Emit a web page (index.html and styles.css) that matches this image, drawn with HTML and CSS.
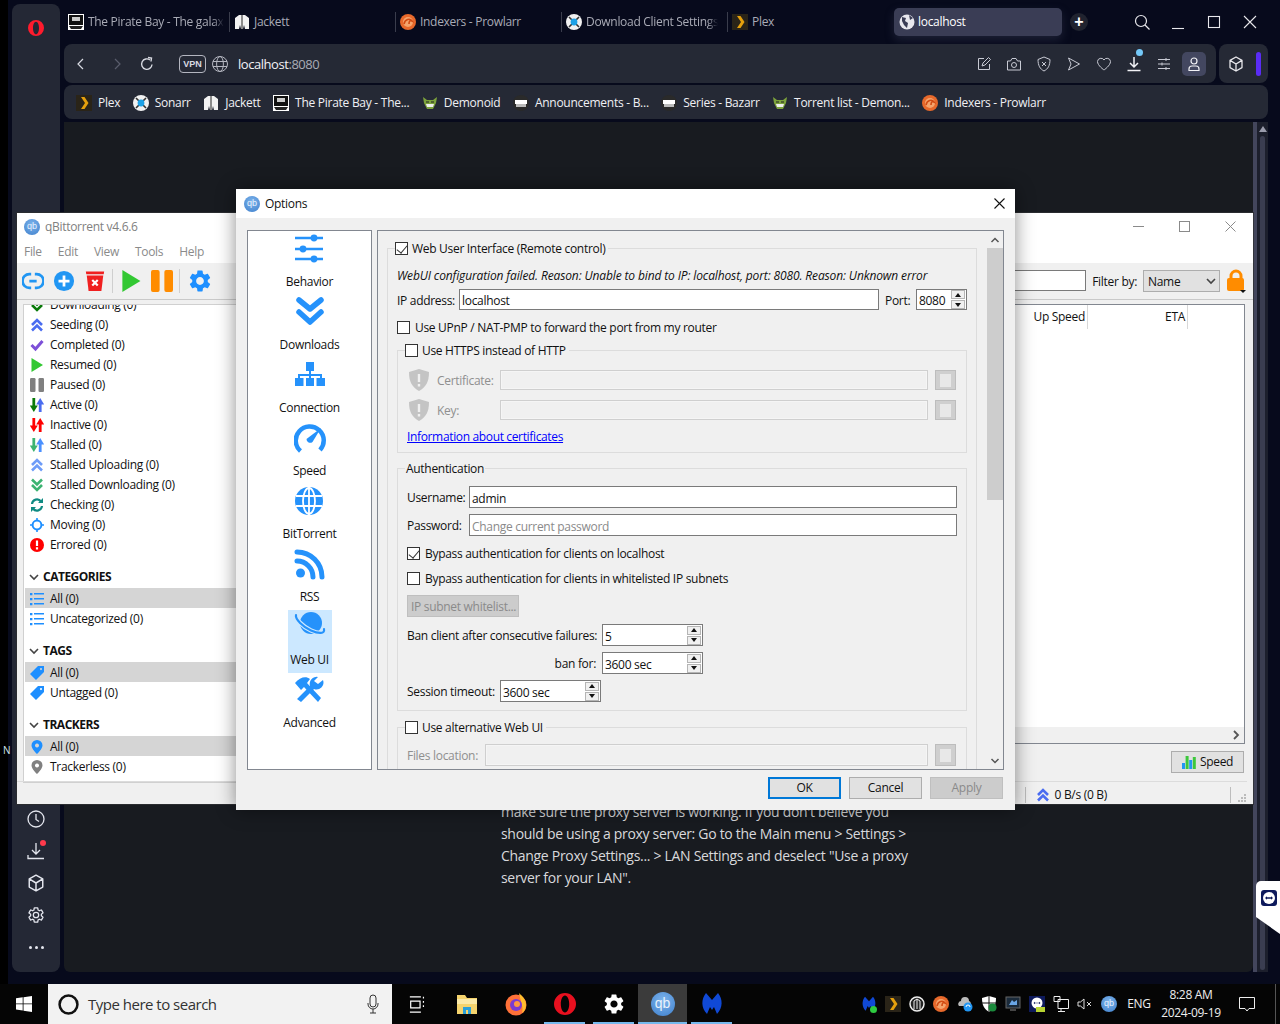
FILE: index.html
```html
<!DOCTYPE html>
<html lang="en">
<head>
<meta charset="utf-8">
<title>qBittorrent options over Opera</title>
<link rel="stylesheet" href="styles.css">
</head>
<body>
<svg class="sprite" xmlns="http://www.w3.org/2000/svg">
  <symbol id="pirate" viewBox="0 0 16 16"><rect width="16" height="16" fill="#fff"/><rect x="1" y="1" width="14" height="10" fill="#111"/><rect x="4" y="3" width="8" height="4" fill="#ccc"/><path d="M1 12h14l-2 3H3z" fill="#222"/></symbol>
  <symbol id="jackett" viewBox="0 0 16 16"><path d="M5 1h6l4 3v11h-4l-1-4-1 4H7l-1-4-1 4H1V4z" fill="#f2f2f2"/><path d="M8 1v14" stroke="#222"/></symbol>
  <symbol id="prowlarr" viewBox="0 0 16 16"><circle cx="8" cy="8" r="8" fill="#e8692b"/><circle cx="8" cy="8" r="5" fill="#f5a46c"/><path d="M4 10c1-5 6-6 8-3-2-1-3 0-3 3" fill="none" stroke="#d24a12" stroke-width="1.6"/></symbol>
  <symbol id="sonarr" viewBox="0 0 16 16"><circle cx="8" cy="8" r="8" fill="#f1f1f1"/><path d="M3 3l10 10M13 3L3 13" stroke="#333" stroke-width="1.6"/><circle cx="8" cy="8" r="3.4" fill="#1da1e6"/></symbol>
  <symbol id="plex" viewBox="0 0 16 16"><rect width="16" height="16" fill="#2a2418"/><path d="M5 2h3.5l4 6-4 6H5l4-6z" fill="#e5a00d"/></symbol>
  <symbol id="demon" viewBox="0 0 16 16"><path d="M1 2l4 3h6l4-3-1 6-3 6H5L2 8z" fill="#7da33c"/><path d="M4 9h8l-1 3H5z" fill="#eee"/><path d="M4 7h3M9 7h3" stroke="#222"/></symbol>
  <symbol id="bazarr" viewBox="0 0 16 16"><circle cx="8" cy="8" r="8" fill="#2a2a2a"/><path d="M2 5h12v4H2z" fill="#fff"/><path d="M3 9h10v3H3z" fill="#bbb"/></symbol>
  <symbol id="globe" viewBox="0 0 16 16"><circle cx="8" cy="8" r="7.5" fill="none" stroke="currentColor"/><ellipse cx="8" cy="8" rx="3.4" ry="7.5" fill="none" stroke="currentColor"/><path d="M1 5.5h14M1 10.5h14" stroke="currentColor"/></symbol>
  <symbol id="earth" viewBox="0 0 16 16"><circle cx="8" cy="8" r="7.5" fill="#e8e8ee"/><path d="M3 3l4 1-1 3 3 2-1 5-3-3-2-4zM10 1l4 3-3 2z" fill="#3a3d55"/></symbol>
  <symbol id="gear" viewBox="0 0 24 24"><path fill="currentColor" fill-rule="evenodd" d="M19.14 12.94c.04-.3.06-.61.06-.94 0-.32-.02-.64-.07-.94l2.03-1.58a.49.49 0 0 0 .12-.61l-1.92-3.32a.488.488 0 0 0-.59-.22l-2.39.96c-.5-.38-1.03-.7-1.62-.94l-.36-2.54a.484.484 0 0 0-.48-.41h-3.84c-.24 0-.43.17-.47.41l-.36 2.54c-.59.24-1.13.57-1.62.94l-2.39-.96c-.22-.08-.47 0-.59.22L2.74 8.87c-.12.21-.08.47.12.61l2.03 1.58c-.05.3-.09.63-.09.94s.02.64.07.94l-2.03 1.58a.49.49 0 0 0-.12.61l1.92 3.32c.12.22.37.29.59.22l2.39-.96c.5.38 1.03.7 1.62.94l.36 2.54c.05.24.24.41.48.41h3.84c.24 0 .44-.17.47-.41l.36-2.54c.59-.24 1.13-.56 1.62-.94l2.39.96c.22.08.47 0 .59-.22l1.92-3.32c.12-.22.07-.47-.12-.61l-2.01-1.58zM12 15.6c-1.98 0-3.6-1.62-3.6-3.6s1.62-3.6 3.6-3.6 3.6 1.62 3.6 3.6-1.62 3.6-3.6 3.6z"/></symbol>
  <symbol id="gear-o" viewBox="0 0 24 24"><path fill="none" stroke="currentColor" stroke-width="1.700" d="M19.14 12.94c.04-.3.06-.61.06-.94 0-.32-.02-.64-.07-.94l2.03-1.58a.49.49 0 0 0 .12-.61l-1.92-3.32a.488.488 0 0 0-.59-.22l-2.39.96c-.5-.38-1.03-.7-1.62-.94l-.36-2.54a.484.484 0 0 0-.48-.41h-3.84c-.24 0-.43.17-.47.41l-.36 2.54c-.59.24-1.13.57-1.62.94l-2.39-.96c-.22-.08-.47 0-.59.22L2.74 8.87c-.12.21-.08.47.12.61l2.03 1.58c-.05.3-.09.63-.09.94s.02.64.07.94l-2.03 1.58a.49.49 0 0 0-.12.61l1.92 3.32c.12.22.37.29.59.22l2.39-.96c.5.38 1.03.7 1.62.94l.36 2.54c.05.24.24.41.48.41h3.84c.24 0 .44-.17.47-.41l.36-2.54c.59-.24 1.13-.56 1.62-.94l2.39.96c.22.08.47 0 .59-.22l1.92-3.32c.12-.22.07-.47-.12-.61l-2.01-1.58zM12 15.6c-1.98 0-3.6-1.62-3.6-3.6s1.62-3.6 3.6-3.6 3.6 1.62 3.6 3.6-1.62 3.6-3.6 3.6z"/></symbol>
  <symbol id="cube" viewBox="0 0 16 16"><path d="M8 1l6 3.4v7.2L8 15l-6-3.4V4.4zM2 4.4L8 8l6-3.6M8 8v7" fill="none" stroke="currentColor" stroke-width="1.3" stroke-linejoin="round"/></symbol>
  <symbol id="dbl-up" viewBox="0 0 14 14"><path d="M2 7l5-5 5 5M2 12.5l5-5 5 5" fill="none" stroke="currentColor" stroke-width="2.6"/></symbol>
  <symbol id="dbl-down" viewBox="0 0 14 14"><path d="M2 1.5l5 5 5-5M2 7l5 5 5-5" fill="none" stroke="currentColor" stroke-width="2.6"/></symbol>
  <symbol id="check" viewBox="0 0 14 14"><path d="M1.5 7l4 4 7-8" fill="none" stroke="currentColor" stroke-width="3"/></symbol>
  <symbol id="tri" viewBox="0 0 14 14"><path d="M1.5 0L13 7 1.5 14z" fill="currentColor"/></symbol>
  <symbol id="bars" viewBox="0 0 14 14"><rect x="0" y="0" width="5.5" height="14" rx="1.2" fill="currentColor"/><rect x="8.5" y="0" width="5.5" height="14" rx="1.2" fill="currentColor"/></symbol>
  <symbol id="arrow-pair" viewBox="0 0 14 14"><path d="M3.800 0v9" fill="none" stroke="currentColor" stroke-width="2.800"/><path d="M-.2 7.500L3.800 14l4-6.500z" fill="currentColor"/><path d="M10.200 14V5" fill="none" stroke="var(--up,currentColor)" stroke-width="2.800"/><path d="M6.200 6.500L10.200 0l4 6.500z" fill="var(--up,currentColor)"/></symbol>
  <symbol id="sync" viewBox="0 0 14 14"><path d="M2 6a5 5 0 0 1 9-2.500M12 8a5 5 0 0 1-9 2.500" fill="none" stroke="currentColor" stroke-width="2.200"/><path d="M13 0v5H8zM1 14V9h5z" fill="currentColor"/></symbol>
  <symbol id="target" viewBox="0 0 14 14"><circle cx="7" cy="7" r="4.4" fill="none" stroke="currentColor" stroke-width="2"/><path d="M7 0v3M7 11v3M0 7h3M11 7h3" stroke="currentColor" stroke-width="1.6"/></symbol>
  <symbol id="err" viewBox="0 0 14 14"><circle cx="7" cy="7" r="7" fill="#f00"/><path d="M5.9 2.500h2.200v5.500H5.900zM5.900 9.300h2.200v2.200H5.900z" fill="#fff"/></symbol>
  <symbol id="list" viewBox="0 0 14 14"><path d="M0 1h2.400v2.200H0zM0 6h2.400v2.200H0zM0 11h2.400v2.200H0zM4 1h10v1.600H4zM4 6h10v1.600H4zM4 11h10v1.600H4z" fill="currentColor"/></symbol>
  <symbol id="tag" viewBox="0 0 14 14"><path d="M8 0h6v6l-8 8-6-6zM11 2a1 1 0 1 0 .01 0z" fill="currentColor" fill-rule="evenodd"/></symbol>
  <symbol id="pin" viewBox="0 0 14 14"><path d="M7 0a5.500 5.500 0 0 1 5.500 5.500C12.500 9 7 14 7 14S1.500 9 1.500 5.500A5.500 5.500 0 0 1 7 0zm0 3.500a2 2 0 1 0 .01 0z" fill="currentColor" fill-rule="evenodd"/></symbol>
  <symbol id="chev-down" viewBox="0 0 10 10"><path d="M1 3l4 4 4-4" fill="none" stroke="currentColor" stroke-width="1.600"/></symbol>
  <symbol id="shield" viewBox="0 0 22 22"><path d="M11 0l10 3c0 10-3 15-10 19C4 18 1 13 1 3z" fill="#c4c4c4"/><path d="M9.800 5h2.400v8H9.800zM9.800 15h2.400v2.400H9.800z" fill="#f0f0f0"/></symbol>
  <symbol id="behavior" viewBox="0 0 32 32"><path d="M2 5h28M2 16h28M2 26h28" stroke="currentColor" stroke-width="2.400"/><circle cx="21" cy="5" r="3.400" fill="currentColor"/><circle cx="10" cy="16" r="3.400" fill="currentColor"/><circle cx="21" cy="26" r="3.400" fill="currentColor"/></symbol>
  <symbol id="downloads" viewBox="0 0 32 32"><path d="M5 4l11 9 11-9M5 16l11 10 11-10" fill="none" stroke="currentColor" stroke-width="5.500" stroke-linecap="round" stroke-linejoin="round"/></symbol>
  <symbol id="connection" viewBox="0 0 32 32"><path d="M12 3h8v9h-8zM1 19h8.500v8H1zM12 19h8v8h-8zM22.500 19H31v8h-8.500z" fill="currentColor"/><path d="M16 12v8M5 20v-4h22v4" fill="none" stroke="currentColor" stroke-width="2"/></symbol>
  <symbol id="speed" viewBox="0 0 32 32"><path d="M6.500 29A14 14 0 1 1 26 28" fill="none" stroke="currentColor" stroke-width="4.500"/><path d="M27 6L18.500 20a3.700 3.700 0 0 1-6-3z" fill="currentColor"/></symbol>
  <symbol id="bt" viewBox="0 0 32 32"><circle cx="16" cy="16" r="14" fill="currentColor"/><g fill="none" stroke="#fff" stroke-width="1.800"><ellipse cx="16" cy="16" rx="6" ry="13"/><path d="M16 2v28M3 11h26M3 21h26"/></g></symbol>
  <symbol id="rss" viewBox="0 0 32 32"><circle cx="6.500" cy="25" r="4.500" fill="currentColor"/><path d="M3 13a16 16 0 0 1 16 16M3 4a25 25 0 0 1 25 25" fill="none" stroke="currentColor" stroke-width="5" stroke-linecap="round"/></symbol>
  <symbol id="webui" viewBox="0 0 32 32"><circle cx="17" cy="12" r="11" fill="currentColor"/><path d="M2 4C1 8 9 16 17 19.500S31 23 30 18" fill="none" stroke="#cce8ff" stroke-width="4.500"/><path d="M2 4C1 8 9 16 17 19.500S31 23 30 18" fill="none" stroke="currentColor" stroke-width="2.200" stroke-linecap="round"/></symbol>
  <symbol id="advanced" viewBox="0 0 32 32"><path d="M2 9c5-6 11-7 15-4l-3 4 14 15-3 4L11 13l-3 3-6-7z" fill="currentColor"/><path d="M30 6a7 7 0 0 1-9 9L8 28l-4-3 13-13a7 7 0 0 1 8-9l-4 4 4 3z" fill="currentColor"/></symbol>
  <symbol id="win" viewBox="0 0 16 16"><path d="M0 2.300l6.700-1v6.200H0zM7.500 1.200L16 0v7.500H7.500zM0 8.300h6.700v6.300l-6.700-1zM7.500 8.300H16V16l-8.500-1.200z" fill="currentColor"/></symbol>
  <symbol id="mb" viewBox="0 0 24 24"><path d="M6 1c-5 6-5 15 1 21l3-7 2 3 2-3 3 7c6-6 6-15 1-21l-6 7z" fill="#1049d6"/></symbol>
</svg>

<div class="desktop">
  <span class="stray">N</span>

  <div class="browser">
    <aside class="rail">
      <svg class="rail-logo" viewBox="0 0 16 16"><path fill="#ff1b2d" fill-rule="evenodd" d="M8 0a8 8 0 1 1 0 16A8 8 0 0 1 8 0zm0 1.700c-1.700 0-3 2.800-3 6.300s1.300 6.300 3 6.300 3-2.800 3-6.300-1.300-6.300-3-6.300z"/></svg>
      <div class="rail-tools">
        <svg class="rail-ico" viewBox="0 0 18 18"><circle cx="9" cy="9" r="8" fill="none" stroke="currentColor" stroke-width="1.300"/><path d="M9 4v5.500l3 2" fill="none" stroke="currentColor" stroke-width="1.300"/></svg>
        <span class="rail-dl">
          <svg class="rail-ico" viewBox="0 0 18 18"><path d="M9 1v11M5 8l4 4 4-4M1 13v3.500h16" fill="none" stroke="currentColor" stroke-width="1.300"/></svg>
          <i class="rail-dot"></i>
        </span>
        <svg class="rail-ico"><use href="#cube"/></svg>
        <svg class="rail-ico"><use href="#gear-o"/></svg>
        <span class="rail-more"><i></i><i></i><i></i></span>
      </div>
    </aside>

    <div class="chrome">
      <nav class="tabs">
        <div class="tab"><svg class="fav"><use href="#pirate"/></svg><span class="tab-fade">The Pirate Bay - The galax</span></div>
        <div class="tab"><svg class="fav"><use href="#jackett"/></svg><span>Jackett</span></div>
        <div class="tab"><svg class="fav"><use href="#prowlarr"/></svg><span>Indexers - Prowlarr</span></div>
        <div class="tab"><svg class="fav"><use href="#sonarr"/></svg><span class="tab-fade">Download Client Settings</span></div>
        <div class="tab tab-plain"><svg class="fav"><use href="#plex"/></svg><span>Plex</span></div>
        <div class="tab-active"><svg class="fav"><use href="#earth"/></svg><span>localhost</span></div>
        <span class="tab-add">+</span>
        <div class="win-ctl">
          <svg class="ctl" viewBox="0 0 16 16"><circle cx="7" cy="7" r="5.500" fill="none" stroke="currentColor" stroke-width="1.200"/><path d="M11 11l4.500 4.500" stroke="currentColor" stroke-width="1.200"/></svg>
          <svg class="ctl" viewBox="0 0 16 16"><path d="M2 14.500h12" stroke="currentColor" stroke-width="1.100"/></svg>
          <svg class="ctl" viewBox="0 0 16 16"><rect x="2.500" y="2.500" width="11" height="11" fill="none" stroke="currentColor" stroke-width="1.100"/></svg>
          <svg class="ctl" viewBox="0 0 16 16"><path d="M2 2l12 12M14 2L2 14" stroke="currentColor" stroke-width="1.100"/></svg>
        </div>
      </nav>

      <div class="addr-row">
        <div class="addr">
          <svg class="nav-ico nav-back" viewBox="0 0 16 16"><path d="M10 3L5 8l5 5" fill="none" stroke="currentColor" stroke-width="1.200"/></svg>
          <svg class="nav-ico nav-fwd" viewBox="0 0 16 16"><path d="M6 3l5 5-5 5" fill="none" stroke="currentColor" stroke-width="1.200"/></svg>
          <svg class="nav-ico nav-reload" viewBox="0 0 16 16"><path d="M13 8.500A5.200 5.200 0 1 1 11 4" fill="none" stroke="currentColor" stroke-width="1.400"/><path d="M9 1.500l3.500.5-.5 3.500" fill="none" stroke="currentColor" stroke-width="1.400"/></svg>
          <span class="vpn">VPN</span>
          <svg class="addr-globe"><use href="#globe"/></svg>
          <span class="url">localhost<span class="url-port">:8080</span></span>
          <div class="addr-tools">
            <svg class="tool" viewBox="0 0 16 16"><path d="M8 2.500H2.500v11h11V8M6 10l1-3 5.500-5.500 2 2L9 9z" fill="none" stroke="currentColor"/></svg>
            <svg class="tool" viewBox="0 0 16 16"><path d="M1.500 5h3l1.500-2.500h4L11.500 5h3v9h-13z" fill="none" stroke="currentColor"/><circle cx="8" cy="9" r="2.500" fill="none" stroke="currentColor"/></svg>
            <svg class="tool" viewBox="0 0 16 16"><path d="M8 1l6 2.500c0 6-2 9.500-6 11.500C4 13 2 9.500 2 3.500z" fill="none" stroke="currentColor"/><path d="M6 6l4 4M10 6l-4 4" stroke="currentColor"/></svg>
            <svg class="tool" viewBox="0 0 16 16"><path d="M2.500 2l11 6-11 6 2.500-6z" fill="none" stroke="currentColor"/></svg>
            <svg class="tool" viewBox="0 0 16 16"><path d="M8 14S1.500 9.500 1.500 5.500A3.500 3.500 0 0 1 8 4a3.500 3.500 0 0 1 6.500 1.500C14.500 9.500 8 14 8 14z" fill="none" stroke="currentColor"/></svg>
            <span class="tool-dl">
              <svg class="tool" viewBox="0 0 16 16"><path d="M8 1v10M4 7l4 4 4-4" fill="none" stroke="currentColor" stroke-width="1.500"/><path d="M1.500 14.500h13" stroke="currentColor" stroke-width="1.500"/></svg>
              <i class="tool-dot"></i>
            </span>
            <svg class="tool" viewBox="0 0 16 16"><path d="M2 3.500h12M2 8h12M2 12.500h12M10 2v3M6 6.500v3M10 11v3" stroke="currentColor"/></svg>
            <span class="profile"><svg class="tool" viewBox="0 0 16 16"><circle cx="8" cy="5" r="3" fill="none" stroke="currentColor" stroke-width="1.200"/><path d="M3 14.500v-1.500a3 3 0 0 1 3-3h4a3 3 0 0 1 3 3v1.500z" fill="none" stroke="currentColor" stroke-width="1.200"/></svg></span>
          </div>
        </div>
        <div class="ext">
          <svg class="tool"><use href="#cube"/></svg>
          <i class="ext-bar"></i>
        </div>
      </div>

      <div class="bookmarks">
        <span class="bm"><svg class="fav"><use href="#plex"/></svg>Plex</span>
        <span class="bm"><svg class="fav"><use href="#sonarr"/></svg>Sonarr</span>
        <span class="bm"><svg class="fav"><use href="#jackett"/></svg>Jackett</span>
        <span class="bm"><svg class="fav"><use href="#pirate"/></svg>The Pirate Bay - The...</span>
        <span class="bm"><svg class="fav"><use href="#demon"/></svg>Demonoid</span>
        <span class="bm"><svg class="fav"><use href="#bazarr"/></svg>Announcements - B...</span>
        <span class="bm"><svg class="fav"><use href="#bazarr"/></svg>Series - Bazarr</span>
        <span class="bm"><svg class="fav"><use href="#demon"/></svg>Torrent list - Demon...</span>
        <span class="bm"><svg class="fav"><use href="#prowlarr"/></svg>Indexers - Prowlarr</span>
      </div>

      <div class="page-row">
        <main class="page">
          <p class="page-text">make sure the proxy server is working. If you don't believe you should be using a proxy server: Go to the Main menu &gt; Settings &gt; Change Proxy Settings... &gt; LAN Settings and deselect "Use a proxy server for your LAN".</p>
        </main>
        <div class="page-scroll"><span class="page-up"></span><span class="page-thumb"></span></div>
      </div>
    </div>
  </div>

  <!-- qBittorrent main window -->
  <section class="window qbt">
    <header class="qbt-title">
      <span class="qb">qb</span>
      <span class="qbt-name">qBittorrent v4.6.6</span>
      <div class="qbt-ctl">
        <svg class="qbt-ctl-ico" viewBox="0 0 11 11"><path d="M0 5.500h11" stroke="currentColor"/></svg>
        <svg class="qbt-ctl-ico" viewBox="0 0 11 11"><rect x=".5" y=".5" width="10" height="10" fill="none" stroke="currentColor"/></svg>
        <svg class="qbt-ctl-ico" viewBox="0 0 11 11"><path d="M.5.500l10 10M10.500.500l-10 10" stroke="currentColor"/></svg>
      </div>
    </header>
    <div class="qbt-menu"><span>File</span><span>Edit</span><span>View</span><span>Tools</span><span>Help</span></div>
    <div class="qbt-tools">
      <span class="tb"><svg class="tb-ico" viewBox="0 0 24 24"><path d="M10 4.500H8a7.500 7.500 0 0 0 0 15h2M14 4.500h2a7.500 7.500 0 0 1 0 15h-2M8 12h8" fill="none" stroke="#2196f3" stroke-width="3"/></svg></span>
      <span class="tb"><svg class="tb-ico" viewBox="0 0 24 24"><circle cx="12" cy="12" r="11" fill="#2196f3"/><path d="M12 6v12M6 12h12" stroke="#fff" stroke-width="3"/></svg></span>
      <span class="tb"><svg class="tb-ico" viewBox="0 0 24 24"><path d="M2 1.500h20l-.5 3h-19z" fill="#f02020"/><path d="M3 6h18l-2 17H5z" fill="#f02020"/><path d="M9 11l6 6M15 11l-6 6" stroke="#fff" stroke-width="2.400"/></svg></span>
      <i class="tb-sep"></i>
      <span class="tb"><svg class="tb-ico c-play"><use href="#tri"/></svg></span>
      <span class="tb"><svg class="tb-ico c-pause"><use href="#bars"/></svg></span>
      <i class="tb-sep"></i>
      <span class="tb tb-gear"><svg class="tb-gear-ico c-blue"><use href="#gear"/></svg></span>
      <div class="qbt-filter">
        <input class="field filter-input" aria-label="Filter">
        <span class="filter-lb">Filter by:</span>
        <span class="combo">Name<svg class="combo-chev"><use href="#chev-down"/></svg></span>
        <span class="lock">
          <svg class="lock-ico" viewBox="0 0 20 24"><path d="M5 10V7a5 5 0 0 1 10 0v3" fill="none" stroke="#ff8c00" stroke-width="3"/><rect x="1" y="9" width="17" height="13" rx="2" fill="#ff8c00"/><path d="M14 21h6l-3 3z" fill="#111"/></svg>
        </span>
      </div>
    </div>
    <div class="qbt-body">
      <div class="side">
        <ul class="side-list side-status">
          <li><svg class="s-ico c-dl"><use href="#dbl-down"/></svg>Downloading (0)</li>
          <li><svg class="s-ico c-seed"><use href="#dbl-up"/></svg>Seeding (0)</li>
          <li><svg class="s-ico c-done"><use href="#check"/></svg>Completed (0)</li>
          <li><svg class="s-ico c-play"><use href="#tri"/></svg>Resumed (0)</li>
          <li><svg class="s-ico c-gray"><use href="#bars"/></svg>Paused (0)</li>
          <li><svg class="s-ico c-dl"><use href="#arrow-pair"/></svg>Active (0)</li>
          <li><svg class="s-ico c-red"><use href="#arrow-pair"/></svg>Inactive (0)</li>
          <li><svg class="s-ico c-sdl"><use href="#arrow-pair"/></svg>Stalled (0)</li>
          <li><svg class="s-ico c-sup"><use href="#dbl-up"/></svg>Stalled Uploading (0)</li>
          <li><svg class="s-ico c-sdl"><use href="#dbl-down"/></svg>Stalled Downloading (0)</li>
          <li><svg class="s-ico c-teal"><use href="#sync"/></svg>Checking (0)</li>
          <li><svg class="s-ico c-blue"><use href="#target"/></svg>Moving (0)</li>
          <li><svg class="s-ico"><use href="#err"/></svg>Errored (0)</li>
        </ul>
        <h3 class="side-head"><svg class="side-chev"><use href="#chev-down"/></svg>CATEGORIES</h3>
        <ul class="side-list">
          <li class="on"><svg class="s-ico c-blue"><use href="#list"/></svg>All (0)</li>
          <li><svg class="s-ico c-blue"><use href="#list"/></svg>Uncategorized (0)</li>
        </ul>
        <h3 class="side-head"><svg class="side-chev"><use href="#chev-down"/></svg>TAGS</h3>
        <ul class="side-list">
          <li class="on"><svg class="s-ico c-blue"><use href="#tag"/></svg>All (0)</li>
          <li><svg class="s-ico c-blue"><use href="#tag"/></svg>Untagged (0)</li>
        </ul>
        <h3 class="side-head"><svg class="side-chev"><use href="#chev-down"/></svg>TRACKERS</h3>
        <ul class="side-list">
          <li class="on"><svg class="s-ico c-blue"><use href="#pin"/></svg>All (0)</li>
          <li><svg class="s-ico c-gray"><use href="#pin"/></svg>Trackerless (0)</li>
        </ul>
      </div>
      <div class="torrents">
        <div class="t-panel">
          <div class="t-head"><span class="t-col">Up Speed</span><span class="t-col">ETA</span></div>
          <div class="t-rows"></div>
          <div class="t-hscroll"><svg class="t-right" viewBox="0 0 8 10"><path d="M2 1l4 4-4 4" fill="none" stroke="#555" stroke-width="1.800"/></svg></div>
        </div>
        <div class="t-foot">
          <span class="speed-btn"><svg class="speed-ico" viewBox="0 0 14 14"><rect x="0" y="8" width="3" height="6" fill="#2196f3"/><rect x="3.600" y="1" width="3" height="13" fill="#3cc83c"/><rect x="7.200" y="5" width="3" height="9" fill="#2196f3"/><rect x="10.800" y="2" width="3" height="12" fill="#3cc83c"/></svg>Speed</span>
        </div>
      </div>
    </div>
    <footer class="qbt-status">
      <i class="st-sep"></i>
      <svg class="st-up c-seed"><use href="#dbl-up"/></svg>
      <span class="st-rate">0 B/s (0 B)</span>
      <i class="st-sep"></i>
      <svg class="st-grip" viewBox="0 0 9 9"><path d="M6 0h2v2H6zM3 3h2v2H3zM6 3h2v2H6zM0 6h2v2H0zM3 6h2v2H3zM6 6h2v2H6z" fill="#bbb"/></svg>
    </footer>
  </section>

  <!-- Options dialog -->
  <section class="window dialog">
    <header class="dlg-title">
      <span class="qb">qb</span>
      <span>Options</span>
      <svg class="dlg-close" viewBox="0 0 11 11"><path d="M.5.500l10 10M10.500.500l-10 10" stroke="#111" stroke-width="1.100"/></svg>
    </header>
    <div class="dlg-body">
      <ul class="opt-list">
        <li class="opt"><div class="opt-in"><svg class="opt-ico"><use href="#behavior"/></svg><span>Behavior</span></div></li>
        <li class="opt"><div class="opt-in"><svg class="opt-ico"><use href="#downloads"/></svg><span>Downloads</span></div></li>
        <li class="opt"><div class="opt-in"><svg class="opt-ico"><use href="#connection"/></svg><span>Connection</span></div></li>
        <li class="opt"><div class="opt-in"><svg class="opt-ico"><use href="#speed"/></svg><span>Speed</span></div></li>
        <li class="opt"><div class="opt-in"><svg class="opt-ico"><use href="#bt"/></svg><span>BitTorrent</span></div></li>
        <li class="opt"><div class="opt-in"><svg class="opt-ico"><use href="#rss"/></svg><span>RSS</span></div></li>
        <li class="opt"><div class="opt-in opt-sel"><svg class="opt-ico"><use href="#webui"/></svg><span>Web UI</span></div></li>
        <li class="opt"><div class="opt-in"><svg class="opt-ico"><use href="#advanced"/></svg><span>Advanced</span></div></li>
      </ul>
      <div class="opt-pane">
        <div class="opt-scroll">
          <fieldset class="grp grp-outer">
            <legend class="lg"><label class="check"><input type="checkbox" checked><span>Web User Interface (Remote control)</span></label></legend>
            <p class="err-msg">WebUI configuration failed. Reason: Unable to bind to IP: localhost, port: 8080. Reason: Unknown error</p>
            <div class="row row-ip">
              <span class="lb-ip">IP address:</span>
              <input class="field grow" value="localhost" aria-label="IP address">
              <span class="lb-port">Port:</span>
              <span class="spin spin-port"><input class="spin-in" value="8080" aria-label="Port"><span class="spin-btns"><b class="up"></b><b class="down"></b></span></span>
            </div>
            <label class="check row-upnp"><input type="checkbox"><span>Use UPnP / NAT-PMP to forward the port from my router</span></label>

            <fieldset class="grp grp-https">
              <legend class="lg"><label class="check"><input type="checkbox"><span>Use HTTPS instead of HTTP</span></label></legend>
              <div class="row row-cert">
                <svg class="shield"><use href="#shield"/></svg>
                <span class="lb-off lb-cert">Certificate:</span>
                <input class="field off grow" aria-label="Certificate" disabled>
                <span class="browse"><i></i></span>
              </div>
              <div class="row row-cert row-key">
                <svg class="shield"><use href="#shield"/></svg>
                <span class="lb-off lb-cert">Key:</span>
                <input class="field off grow" aria-label="Key" disabled>
                <span class="browse"><i></i></span>
              </div>
              <a class="link" href="#">Information about certificates</a>
            </fieldset>

            <fieldset class="grp grp-auth">
              <legend class="lg lg-auth">Authentication</legend>
              <div class="row row-user">
                <span class="lb-user">Username:</span>
                <input class="field tall grow" value="admin" aria-label="Username">
              </div>
              <div class="row row-pass">
                <span class="lb-user">Password:</span>
                <input class="field tall grow" placeholder="Change current password" aria-label="Password">
              </div>
              <label class="check row-by1"><input type="checkbox" checked><span>Bypass authentication for clients on localhost</span></label>
              <label class="check row-by2"><input type="checkbox"><span>Bypass authentication for clients in whitelisted IP subnets</span></label>
              <span class="subnet">IP subnet whitelist...</span>
              <div class="row row-ban">
                <span class="lb-ban">Ban client after consecutive failures:</span>
                <span class="spin spin-wide"><input class="spin-in" value="5" aria-label="Ban after"><span class="spin-btns"><b class="up"></b><b class="down"></b></span></span>
              </div>
              <div class="row row-ban row-next">
                <span class="lb-ban lb-right">ban for:</span>
                <span class="spin spin-wide"><input class="spin-in" value="3600 sec" aria-label="Ban for"><span class="spin-btns"><b class="up"></b><b class="down"></b></span></span>
              </div>
              <div class="row row-ban row-next">
                <span class="lb-sess">Session timeout:</span>
                <span class="spin spin-wide"><input class="spin-in" value="3600 sec" aria-label="Session timeout"><span class="spin-btns"><b class="up"></b><b class="down"></b></span></span>
              </div>
            </fieldset>

            <fieldset class="grp grp-alt">
              <legend class="lg"><label class="check"><input type="checkbox"><span>Use alternative Web UI</span></label></legend>
              <div class="row row-files">
                <span class="lb-off lb-files">Files location:</span>
                <input class="field off tall grow" aria-label="Files location" disabled>
                <span class="browse"><i></i></span>
              </div>
            </fieldset>
          </fieldset>
        </div>
        <div class="opt-vbar">
          <svg class="vbar-arrow" viewBox="0 0 10 8"><path d="M1.500 6L5 2.500 8.500 6" fill="none" stroke="#555" stroke-width="1.500"/></svg>
          <div class="vbar-track"><div class="vbar-thumb"></div></div>
          <svg class="vbar-arrow" viewBox="0 0 10 8"><path d="M1.500 2L5 5.500 8.500 2" fill="none" stroke="#555" stroke-width="1.500"/></svg>
        </div>
      </div>
    </div>
    <footer class="dlg-foot">
      <span class="btn btn-ok">OK</span>
      <span class="btn">Cancel</span>
      <span class="btn btn-off">Apply</span>
    </footer>
  </section>

  <!-- TeamViewer edge tab -->
  <div class="tv">
    <svg class="tv-ico" viewBox="0 0 16 16"><rect width="16" height="16" rx="3" fill="#0e1a5c"/><circle cx="8" cy="8" r="6" fill="#fff"/><path d="M4 8l2-1.800v1h4v-1L12 8l-2 1.800v-1H6v1z" fill="#0e1a5c"/></svg>
  </div>

  <!-- Windows taskbar -->
  <footer class="taskbar">
    <span class="tk-start"><svg class="tk-win"><use href="#win"/></svg></span>
    <div class="tk-search">
      <svg class="tk-circle" viewBox="0 0 20 20"><circle cx="10" cy="10" r="8.500" fill="none" stroke="#111" stroke-width="2.400"/></svg>
      <span class="tk-ph">Type here to search</span>
      <svg class="tk-mic" viewBox="0 0 14 20"><rect x="4" y="1" width="6" height="12" rx="3" fill="none" stroke="#333"/><path d="M2 9v1a5 5 0 0 0 10 0V9M7 15v4M4 19h6" fill="none" stroke="#333"/></svg>
    </div>
    <div class="tk-apps">
      <span class="tk-app"><svg class="tk-ico-sm" viewBox="0 0 20 20"><path d="M1 1h13M1 19h13M2 6h11v8H2zM17 1v2M17 6v2M17 11v2" fill="none" stroke="#fff" stroke-width="1.400"/></svg></span>
      <span class="tk-app"><svg class="tk-ico" viewBox="0 0 24 24"><path d="M2 3h8l2 3h10v16H2z" fill="#f5d36d"/><path d="M2 7h20v5H2z" fill="#fbe9a8"/><path d="M8 22v-7h8v7h-3v-4h-2v4z" fill="#2aa0da"/></svg></span>
      <span class="tk-app"><svg class="tk-ico" viewBox="0 0 24 24"><circle cx="12" cy="13" r="10.500" fill="#ff7139"/><path d="M15 1c3 3 7 6 7 12a10 10 0 0 1-4 8c2-6-2-13-3-20z" fill="#ffbd2e"/><circle cx="12" cy="13" r="6" fill="#7a3bd1"/><circle cx="13" cy="12" r="3" fill="#ff9640"/></svg></span>
      <span class="tk-app tk-run"><svg class="tk-ico" viewBox="0 0 24 24"><path fill="#e8101f" fill-rule="evenodd" d="M12 1a11 11 0 1 1 0 22 11 11 0 0 1 0-22zm0 2.500c-2.400 0-4.200 3.800-4.200 8.500s1.800 8.500 4.200 8.500 4.200-3.800 4.200-8.500-1.800-8.500-4.200-8.500z"/></svg></span>
      <span class="tk-app tk-run"><svg class="tk-ico tk-gear"><use href="#gear"/></svg></span>
      <span class="tk-app tk-run tk-on"><span class="qb qb-lg">qb</span></span>
      <span class="tk-app tk-run"><svg class="tk-ico"><use href="#mb"/></svg></span>
    </div>
    <div class="tray">
      <span class="tr"><svg class="tr-ico"><use href="#mb"/></svg><i class="tr-green"></i></span>
      <span class="tr"><svg class="tr-ico"><use href="#plex"/></svg></span>
      <span class="tr"><svg class="tr-ico" viewBox="0 0 16 16"><circle cx="8" cy="8" r="7" fill="#222" stroke="#eee" stroke-width="1.500"/><path d="M5 13V5l3-2 3 2v8M8 3v10" fill="none" stroke="#eee"/></svg></span>
      <span class="tr"><svg class="tr-ico"><use href="#prowlarr"/></svg></span>
      <span class="tr"><svg class="tr-ico" viewBox="0 0 16 16"><path d="M2 10a3 3 0 0 1 2-5 4 4 0 0 1 8 0 3 3 0 0 1 1 5z" fill="#bbb"/><circle cx="11" cy="11" r="4.500" fill="#2196f3"/><path d="M9 11a2 2 0 0 1 4 0" stroke="#fff" fill="none"/></svg></span>
      <span class="tr"><svg class="tr-ico" viewBox="0 0 16 16"><path d="M8 0l7 2c0 7-2 11-7 14C3 13 1 9 1 2z" fill="#fff"/><path d="M8 0v16M1 7h14" stroke="#111"/><circle cx="11.500" cy="11.500" r="4" fill="#1a8a3c"/></svg></span>
      <span class="tr"><svg class="tr-ico" viewBox="0 0 16 16"><rect x="1" y="1" width="14" height="11" fill="#1a2a3a" stroke="#666"/><path d="M4 9l3-5 2 2 3-2v5z" fill="#6aa6e6"/><path d="M5 14h6" stroke="#888"/></svg></span>
      <span class="tr"><svg class="tr-ico" viewBox="0 0 16 16"><rect width="16" height="16" fill="#0e1a5c"/><circle cx="8" cy="7" r="5.500" fill="#fff"/><path d="M4.500 7l1.500-1.300v2.600zM11.500 7L10 5.700v2.600zM6 6.700h4v.6H6z" fill="#0e1a5c"/><rect x="7" y="11" width="9" height="5" fill="#b8d432"/></svg></span>
      <span class="tr"><svg class="tr-ico" viewBox="0 0 16 16"><path d="M5 3.500h10.500v9H5zM1 .500h6v5H1zM8 12.500v3M5 15.500h7" fill="#000" stroke="#eee"/></svg></span>
      <span class="tr"><svg class="tr-ico" viewBox="0 0 16 16"><path d="M1 6v4h2.500L7 13V3L3.500 6zM10 6l4 4M14 6l-4 4" fill="none" stroke="#ddd"/></svg></span>
      <span class="tr"><span class="qb">qb</span></span>
      <span class="tr-lang">ENG</span>
      <span class="tr-clock"><span>8:28 AM</span><span>2024-09-19</span></span>
      <span class="tr-note"><svg class="tr-note-ico" viewBox="0 0 16 16"><path d="M.5 1.500h15v11H10l-2 2.500-2-2.500H.5z" fill="none" stroke="#eee"/></svg></span>
      <i class="tr-desktop"></i>
    </div>
  </footer>
</div>
</body>
</html>
```
FILE: styles.css
```css
* { box-sizing: border-box; }
html, body { margin: 0; padding: 0; background: #000; }
body { font: 12px/16px "Open Sans", "Noto Sans", sans-serif; letter-spacing: -.3px; color: #111; }
ul { list-style: none; margin: 0; padding: 0; }
p { margin: 0; }
i { display: block; font-style: normal; }
.sprite { position: absolute; width: 0; height: 0; overflow: hidden; }

.desktop { position: relative; width: 1280px; height: 1024px; overflow: hidden; display: flex; flex-direction: column; background: #000; }
.stray { position: absolute; left: 3px; top: 744px; color: #cfe4ee; font-size: 10px; line-height: 12px; }

.qb { flex: none; display: block; width: 16px; height: 16px; border-radius: 50%; background: radial-gradient(circle at 50% 35%, #7db4ec, #3f80cc); color: #e8f2fc; font: 9px/15px "Liberation Sans", sans-serif; letter-spacing: 0; text-align: center; }
.qb-lg { width: 24px; height: 24px; font-size: 14px; line-height: 22px; }

/* browser */
.browser { flex: none; height: 984px; margin-left: 8px; background: #070a1c; display: flex; padding-left: 4px; color: #e8e8ec; }
.rail { flex: none; width: 48px; height: 968px; margin-top: 4px; background: #242835; border-radius: 8px; display: flex; flex-direction: column; align-items: center; color: #e4e6ee; }
.rail-logo { display: block; width: 16px; height: 16px; margin-top: 16px; }
.rail-tools { margin-top: auto; padding-bottom: 16px; display: flex; flex-direction: column; align-items: center; gap: 14px; }
.rail-ico { display: block; width: 18px; height: 18px; }
.rail-dl { position: relative; display: block; }
.rail-dot { position: absolute; left: 13px; top: -2px; width: 6px; height: 6px; border-radius: 50%; background: #ff3a4c; }
.rail-more { display: flex; gap: 3px; height: 18px; align-items: center; }
.rail-more i { width: 3px; height: 3px; border-radius: 50%; background: #e4e6ee; }

.chrome { flex: none; width: 1204px; margin-left: 4px; }
.tabs { height: 44px; display: flex; align-items: center; }
.tab { flex: none; width: 166px; height: 20px; padding-left: 4px; display: flex; align-items: center; gap: 4px; border-right: 1px solid #3a3d4c; color: #a9abb6; white-space: nowrap; }
.tab-plain { border-right: 0; }
.tab-fade { -webkit-mask-image: linear-gradient(90deg, #000 92%, transparent); mask-image: linear-gradient(90deg, #000 92%, transparent); }
.fav { flex: none; display: block; width: 16px; height: 16px; }
.tab-active { flex: none; width: 168px; height: 28px; margin-top: -1px; background: #3a3d55; border-radius: 5px; padding-left: 5px; display: flex; align-items: center; gap: 3px; color: #fff; box-shadow: 0 4px 10px rgba(70, 74, 100, .35); }
.tab-add { flex: none; width: 18px; height: 18px; margin-left: 8px; border-radius: 50%; background: #20232f; color: #fff; font: bold 16px/17px "Liberation Sans", sans-serif; text-align: center; letter-spacing: 0; }
.win-ctl { margin-left: 46px; display: flex; gap: 20px; color: #e8e8ec; }
.ctl { display: block; width: 16px; height: 16px; }

.addr-row { height: 39px; margin-bottom: 2px; display: flex; gap: 3px; }
.addr { flex: none; width: 1152px; background: #252935; border-radius: 8px; display: flex; align-items: center; }
.nav-ico { flex: none; width: 16px; height: 16px; color: #d8dae2; }
.nav-back { margin-left: 9px; }
.nav-fwd { margin-left: 20px; color: #5a5d6c; }
.nav-reload { margin-left: 14px; }
.vpn { flex: none; margin-left: 24px; width: 27px; height: 18px; border: 1px solid #b4b6c0; border-radius: 4px; font: bold 9px/16px "Liberation Sans", sans-serif; letter-spacing: 0; text-align: center; color: #d8dae2; }
.addr-globe { flex: none; width: 16px; height: 16px; margin-left: 6px; color: #b4b6c0; }
.url { margin-left: 10px; font-size: 13px; letter-spacing: -.45px; color: #f2f2f6; }
.url-port { color: #a9abb6; }
.addr-tools { margin-left: auto; margin-right: 10px; display: flex; align-items: center; gap: 14px; color: #c8cad4; }
.tool { display: block; flex: none; width: 16px; height: 16px; }
.tool-dl { position: relative; display: block; color: #f2f2f6; }
.tool-dot { position: absolute; left: 10px; top: -7px; width: 7px; height: 7px; border-radius: 50%; background: #74c8f8; }
.profile { display: flex; align-items: center; justify-content: center; width: 24px; height: 24px; margin-left: -4px; background: #434760; border-radius: 5px; color: #f2f2f6; }
.ext { flex: none; width: 49px; background: #252935; border-radius: 8px; display: flex; align-items: center; padding-left: 9px; color: #e8e8ec; }
.ext-bar { width: 5px; height: 24px; margin-left: 12px; border-radius: 3px; background: #5a2cf5; }

.bookmarks { height: 34px; margin-bottom: 3px; padding: 1px 0 0 12px; background: #252935; border-radius: 8px; display: flex; align-items: center; gap: 12.500px; letter-spacing: -.27px; color: #f0f0f4; }
.bm { display: flex; align-items: center; gap: 6px; white-space: nowrap; }

.page-row { height: 850px; display: flex; }
.page { flex: none; width: 1189px; background: #181b20; border-radius: 0 0 6px 6px; padding: 679px 0 0 437px; }
.page-text { width: 420px; font-size: 14px; line-height: 22px; font-weight: 500; color: #d8d9dc; }
.page-scroll { flex: none; width: 15px; border-left: 4px solid #43465c; background: #1c1f2c; display: flex; flex-direction: column; align-items: center; }
.page-up { margin-top: 4px; width: 0; height: 0; border: 4px solid transparent; border-top: 0; border-bottom: 6px solid #9a9cac; }
.page-thumb { width: 5px; margin-top: 4px; flex: 1; background: #3a3d50; border-radius: 3px; margin-bottom: 2px; }

/* windows */
.window { position: absolute; display: flex; flex-direction: column; background: #f0f0f0; }
.qbt { left: 16px; top: 212px; width: 1238px; height: 593px; border: 1px solid #2a2c30; border-right-color: #33353d; }
.qbt-title { flex: none; height: 27px; background: #fff; display: flex; align-items: center; padding-left: 7px; color: #808080; }
.qbt-name { margin-left: 5px; }
.qbt-ctl { margin-left: auto; display: flex; color: #8a8a8a; padding-right: 17px; gap: 35px; }
.qbt-ctl-ico { display: block; width: 11px; height: 11px; }
.qbt-menu { flex: none; height: 23px; background: #fff; display: flex; align-items: center; padding-left: 7px; gap: 16px; color: #8a8a8a; }
.qbt-tools { flex: none; height: 35px; margin-top: 2px; padding: 0 7px 3px 0; border-bottom: 1px solid #c9c9c9; display: flex; align-items: center; background: #f0f0f0; }
.tb { flex: none; width: 31px; display: flex; justify-content: center; }
.tb-ico { display: block; width: 22px; height: 22px; }
.tb-gear { margin-left: 2px; }
.tb-gear-ico { display: block; width: 26px; height: 26px; }
.tb-sep { flex: none; width: 1px; height: 24px; margin: 0 2px; background: #cfcfcf; }
.qbt-filter { margin-left: auto; display: flex; align-items: center; gap: 6px; }
.filter-input { width: 200px; }
.filter-lb { padding-top: 2px; }
.combo { position: relative; width: 77px; height: 22px; background: #e1e1e1; border: 1px solid #adadad; padding-left: 4px; line-height: 21px; }
.combo-chev { position: absolute; right: 3px; top: 5px; width: 10px; height: 10px; color: #444; }
.lock { display: block; width: 20px; height: 24px; }
.lock-ico { display: block; width: 20px; height: 24px; }

.qbt-body { flex: 1; min-height: 0; display: flex; padding: 3px 8px 0 6px; gap: 6px; }
.side { flex: none; width: 300px; height: 479px; background: #fff; border: 1px solid #d0d0d0; overflow: hidden; padding: 1px 0 0 1px; margin-top: 1px; }
.side-list li { height: 20px; display: flex; align-items: center; gap: 6px; padding-left: 5px; white-space: nowrap; }
.side-head + .side-list li { padding-top: 2px; }
.side-status { margin: -11px 0 -1px; }
.side-list .on { background: #d5d5d5; }
.s-ico { flex: none; display: block; width: 14px; height: 14px; }
.side-head { height: 20px; margin: 13px 0 1px; padding-left: 4px; display: flex; align-items: center; gap: 4px; font-size: 12px; font-weight: 700; letter-spacing: -.5px; }
.side-chev { flex: none; width: 10px; height: 10px; color: #444; }
.c-blue { color: #1e8fff; }
.c-dl { color: #0a7a0a; --up: #4a6cf0; }
.c-seed { color: #4a6cf0; }
.c-done { color: #7d50d8; }
.c-play { color: #32c832; }
.c-pause { color: #ff8c00; }
.c-gray { color: #808080; }
.c-red { color: #f00; }
.c-sdl { color: #3cb371; --up: #4a90ff; }
.c-sup { color: #6e9cf8; }
.c-teal { color: #0f8a82; }

.torrents { flex: 1; min-width: 0; display: flex; flex-direction: column; margin-top: 1px; }
.t-panel { flex: none; height: 440px; background: #fff; border: 1px solid #828790; display: flex; flex-direction: column; }
.t-head { flex: none; height: 24px; display: flex; justify-content: flex-end; padding-right: 56px; }
.t-col { width: 100px; text-align: right; padding: 4px 2px 0 0; border-right: 1px solid #d8d8d8; }
.t-rows { flex: 1; }
.t-hscroll { flex: none; height: 16px; background: #f0f0f0; display: flex; justify-content: flex-end; align-items: center; padding-right: 4px; }
.t-right { display: block; width: 8px; height: 10px; }
.t-foot { flex: 1; display: flex; justify-content: flex-end; padding: 7px 1px 0 0; }
.speed-btn { width: 73px; height: 22px; background: #e1e1e1; border: 1px solid #adadad; display: flex; align-items: center; justify-content: center; gap: 4px; }
.speed-ico { display: block; width: 14px; height: 14px; }

.qbt-status { flex: none; height: 23px; padding-top: 4px; border-top: 1px solid #dcdcdc; margin-right: 6px; display: flex; align-items: center; justify-content: flex-end; }
.st-sep { width: 1px; height: 16px; background: #bdbdbd; }
.st-up { width: 14px; height: 14px; display: block; margin-left: 10px; }
.st-rate { margin-left: 5px; margin-right: 123px; }
.st-grip { width: 9px; height: 9px; margin: 6px 0 0 7px; display: block; }

.dialog { left: 236px; top: 189px; width: 779px; height: 621px; box-shadow: 0 0 18px rgba(0, 0, 0, .45); }
.dlg-title { flex: none; height: 29px; background: #fff; display: flex; align-items: center; padding: 0 10px 0 8px; gap: 5px; }
.dlg-close { margin-left: auto; display: block; width: 11px; height: 11px; }
.dlg-body { flex: none; height: 540px; margin-top: 12px; display: flex; padding: 0 11px; gap: 5px; }
.opt-list { flex: none; width: 125px; background: #fff; border: 1px solid #828790; padding-top: 1px; overflow: hidden; }
.opt { height: 63px; display: flex; justify-content: center; }
.opt-in { min-width: 44px; height: 63px; display: flex; flex-direction: column; align-items: center; padding-top: 1px; white-space: nowrap; }
.opt-ico { flex: none; display: block; width: 32px; height: 32px; margin-bottom: 9px; color: #2592fb; }
.opt-sel { background: #cce8ff; }
.opt-pane { flex: none; width: 627px; border: 1px solid #828790; display: flex; overflow: hidden; }
.opt-scroll { flex: 1; min-width: 0; overflow: hidden; padding-top: 10px; }
.opt-vbar { flex: none; width: 16px; display: flex; flex-direction: column; align-items: center; background: #f0f0f0; }
.vbar-arrow { flex: none; display: block; width: 10px; height: 8px; margin: 5px 0 4px; }
.vbar-track { flex: 1; align-self: stretch; }
.vbar-thumb { height: 252px; background: #cdcdcd; }

.grp { margin: 0; padding: 0; border: 1px solid #dcdcdc; min-width: 0; }
.grp-outer { margin-left: 9px; width: 590px; padding: 0 9px 30px 9px; }
.lg { padding: 0 3px 0 0; margin-left: -2px; height: 14px; line-height: 14px; }
.check { display: flex; align-items: center; gap: 4px; height: 16px; white-space: nowrap; }
.lg .check { height: 14px; }
.check span { padding-top: 2px; }
.check input { appearance: none; -webkit-appearance: none; position: relative; flex: none; width: 13px; height: 13px; margin: 0; background: #fff; border: 1px solid #333; }
.check input:checked::after { content: ""; position: absolute; left: 3px; top: 0; width: 5px; height: 9px; border: solid #333; border-width: 0 1.400px 1.400px 0; transform: rotate(40deg); }
.err-msg { margin-top: 13px; font-style: italic; white-space: nowrap; letter-spacing: -.13px; }
.row { display: flex; align-items: center; white-space: nowrap; }
.row > span:not(.spin):not(.browse) { padding-top: 2px; }
.grow { flex: 1; min-width: 0; }
.field { height: 21px; margin: 0; padding: 2px 2px 0; background: #fff; border: 1px solid #7a7a7a; border-radius: 0; font: inherit; letter-spacing: inherit; color: #111; outline: 0; }
.field.tall { height: 22px; }
.field::placeholder { color: #8a8a8a; opacity: 1; }
.field.off { background: #f0f0f0; border-color: #cfcfcf; box-shadow: inset 0 0 0 1px #f5f5f5; }
.row-ip { margin-top: 5px; height: 21px; }
.lb-ip { width: 62px; }
.lb-port { margin-left: 6px; width: 31px; }
.spin { flex: none; display: flex; align-items: center; background: #fff; border: 1px solid #7a7a7a; height: 22px; padding-right: 1px; }
.spin-port { width: 51px; height: 21px; }
.spin-wide { width: 101px; }
.spin-in { flex: 1; min-width: 0; height: 100%; border: 0; margin: 0; padding: 2px 2px 0; background: transparent; font: inherit; letter-spacing: inherit; color: #111; outline: 0; }
.spin-btns { flex: none; width: 14px; display: flex; flex-direction: column; gap: 1px; }
.spin-btns b { display: flex; justify-content: center; align-items: center; height: 9px; background: #f0f0f0; border: 1px solid #b5b5b5; }
.spin-btns b::after { content: ""; width: 0; height: 0; border: 3px solid transparent; }
.spin-btns .up::after { border-top: 0; border-bottom: 4px solid #111; }
.spin-btns .down::after { border-bottom: 0; border-top: 4px solid #111; }
.row-upnp { margin-top: 9px; gap: 5px; }

.grp-https { margin-top: 8px; padding: 0 10px 7px 10px; }
.grp-https > .lg { margin-left: -3px; }
.row-cert { margin-top: 13px; height: 20px; }
.row-key { margin-top: 10px; }
.shield { flex: none; width: 22px; height: 22px; }
.lb-off { color: #8f8f8f; }
.lb-cert { width: 70px; padding-left: 7px; flex: none; }
.row-cert .field { height: 20px; }
.browse { flex: none; width: 21px; height: 20px; margin-left: 7px; background: #cfcfcf; border: 1px solid #bdbdbd; display: flex; align-items: center; justify-content: center; }
.browse i { width: 11px; height: 13px; background: #e8e8e8; }
.link { display: block; margin: 9px 0 0 -1px; color: #00f; text-decoration: underline; letter-spacing: -.35px; }

.grp-auth { margin-top: 7px; padding: 0 9px 8px 9px; }
.lg-auth { height: 16px; line-height: 18px; margin-left: -2px; padding: 0 1px; }
.row-user { margin-top: 10px; height: 22px; }
.row-pass { margin-top: 6px; height: 22px; }
.lb-user { flex: none; width: 62px; }
.row-by1 { margin-top: 9px; gap: 5px; }
.row-by2 { margin-top: 9px; gap: 5px; }
.subnet { display: block; margin-top: 9px; width: 112px; height: 22px; background: #ccc; border: 1px solid #bfbfbf; color: #8a8a8a; line-height: 22px; padding-left: 3px; white-space: nowrap; }
.row-ban { margin-top: 7px; height: 22px; gap: 6px; }
.row-next { margin-top: 6px; }
.lb-ban { flex: none; width: 189px; }
.lb-right { text-align: right; }
.lb-sess { flex: none; width: 87px; }

.grp-alt { margin-top: 9px; padding: 0 10px 30px 9px; }
.row-files { margin-top: 10px; height: 22px; }
.lb-files { flex: none; width: 78px; }
.row-files .browse { height: 22px; }

.dlg-foot { flex: none; height: 22px; margin-top: 7px; padding-right: 12px; display: flex; justify-content: flex-end; gap: 8px; }
.btn { width: 73px; height: 22px; background: #e1e1e1; border: 1px solid #adadad; text-align: center; line-height: 20px; }
.btn-ok { border: 2px solid #0078d7; line-height: 18px; }
.btn-off { background: #ccc; border-color: #bfbfbf; color: #8a8a8a; }

/* TeamViewer tab */
.tv { position: absolute; right: 0; top: 881px; width: 24px; height: 53px; padding: 9px 0 0 5px; background: #fff; border-radius: 5px 0 0 0; clip-path: polygon(0 0, 100% 0, 100% 100%, 0 68%); }
.tv-ico { display: block; width: 16px; height: 16px; }

/* taskbar */
.taskbar { flex: none; height: 40px; background: #050505; display: flex; color: #fff; }
.tk-start { flex: none; width: 48px; display: flex; align-items: center; padding-left: 16px; }
.tk-win { display: block; width: 16px; height: 16px; color: #fff; }
.tk-search { flex: none; width: 344px; background: #f2f2f2; display: flex; align-items: center; padding: 0 12px 0 10px; gap: 9px; color: #333; }
.tk-circle { flex: none; display: block; width: 21px; height: 21px; }
.tk-ph { flex: 1; font-size: 15px; letter-spacing: -.5px; white-space: nowrap; }
.tk-mic { flex: none; display: block; width: 14px; height: 20px; }
.tk-apps { display: flex; margin-left: 1px; }
.tk-app { position: relative; flex: none; width: 49px; height: 40px; display: flex; align-items: center; justify-content: center; }
.tk-ico { display: block; width: 24px; height: 24px; }
.tk-ico-sm { display: block; width: 17px; height: 17px; }
.tk-gear { color: #fff; }
.tk-on { background: #3b3b3b; }
.tk-run::after { content: ""; position: absolute; left: 4px; right: 4px; bottom: 0; height: 2px; background: #76b9ed; }
.tk-on::after { left: 0; right: 0; }
.tray { margin-left: auto; display: flex; align-items: center; }
.tr { position: relative; flex: none; width: 24px; height: 40px; display: flex; align-items: center; justify-content: center; }
.tr-ico { display: block; width: 16px; height: 16px; }
.tr-green { position: absolute; left: 13px; top: 22px; width: 7px; height: 7px; border-radius: 50%; background: #2ecc40; }
.tr-lang { flex: none; width: 30px; margin-left: 3px; text-align: center; color: #eee; }
.tr-clock { flex: none; width: 72px; margin-left: 1px; display: flex; flex-direction: column; align-items: center; gap: 2px; color: #eee; }
.tr-note { flex: none; width: 40px; display: flex; justify-content: center; }
.tr-note-ico { display: block; width: 16px; height: 16px; }
.tr-desktop { width: 5px; height: 40px; margin-left: 8px; border-left: 1px solid #555; }
```
